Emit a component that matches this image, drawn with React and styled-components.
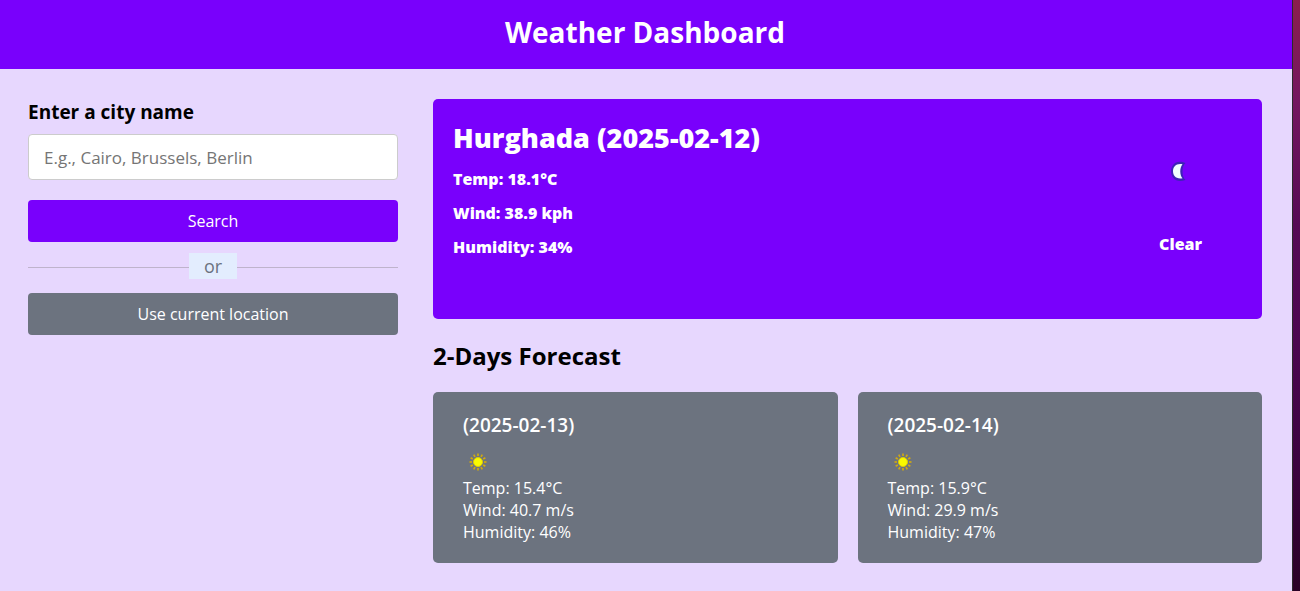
import React from "react";
import styled, { createGlobalStyle } from "styled-components";

const GlobalStyle = createGlobalStyle`
  * { box-sizing: border-box; margin: 0; padding: 0; }
  body { font-family: "Open Sans", sans-serif; font-size: 16px; color: #000; }
  button, input { font-family: inherit; }
`;

const Desktop = styled.div`
  display: flex;
  min-height: 100vh;
  padding-right: 7px;
  background: linear-gradient(#8b1e4e 0%, #74165f 17%, #560a55 38%, #4c0650 58%, #3c0340 78%, #2a0126 100%);
`;

const Page = styled.div`
  flex: 1;
  min-width: 0;
  background: #e7d7fe;
  border-right: 1px solid #2b2b2b;
`;

const Header = styled.header`
  padding: 12px 0 17px;
  background: #7900fc;
  color: #fff;
  text-align: center;
`;

const Title = styled.h1`
  font-size: 28px;
  line-height: 40px;
  padding-right: 2px;
`;

const Container = styled.div`
  display: flex;
  gap: 35px;
  padding: 30px 30px 28px 28px;
`;

const SearchPanel = styled.form`
  flex: 0 1 370px;
  display: flex;
  flex-direction: column;
`;

const CityLabel = styled.label`
  font-size: 19px;
  font-weight: 700;
  line-height: 26px;
  margin-bottom: 9px;
`;

const CityInput = styled.input`
  width: 100%;
  height: 46px;
  padding: 0 15px;
  border: 1px solid #ccc;
  border-radius: 4px;
  background: #fff;
  font-size: 17px;
  &::placeholder { color: #757575; }
`;

const Button = styled.button`
  width: 100%;
  height: 42px;
  margin-top: ${(p) => (p.$secondary ? "0" : "20px")};
  border: 0;
  border-radius: 4px;
  background: ${(p) => (p.$secondary ? "#6c737f" : "#7900fc")};
  color: #fff;
  font-size: 16px;
  cursor: pointer;
`;

const Separator = styled.div`
  display: flex;
  align-items: center;
  margin: 11px 0 14px;
  &::before, &::after {
    content: "";
    flex: 1;
    height: 1px;
    margin-top: 2px;
    background: #bfb3cc;
  }
`;

const SeparatorText = styled.span`
  padding: 0 15px;
  background: #e3edfe;
  color: #6c737f;
  font-size: 18px;
  line-height: 26px;
`;

const Weather = styled.main`
  flex: 1;
  min-width: 0;
`;

const CurrentCard = styled.section`
  display: flex;
  justify-content: space-between;
  min-height: 220px;
  padding: 20px 60px 20px 20px;
  border-radius: 5px;
  background: #7900fc;
  color: #fff;
  font-weight: 800;
`;

const City = styled.h2`
  font-size: 27px;
  font-weight: 800;
  line-height: 37px;
`;

const Reading = styled.p`
  margin-top: 12px;
  line-height: 22px;
`;

const Condition = styled.div`
  display: flex;
  flex-direction: column;
  align-items: center;
  padding-top: 20px;
  line-height: 22px;
`;

const MoonIcon = styled.svg`
  width: 64px;
  height: 64px;
  margin: 0 -12px 30px;
`;

const ForecastTitle = styled.h2`
  margin: 20px 0;
  font-size: 24px;
  line-height: 33px;
`;

const Forecast = styled.ul`
  display: grid;
  grid-template-columns: 1fr 1fr;
  gap: 20px;
  list-style: none;
`;

const DayCard = styled.li`
  padding: 20px 30px;
  border-radius: 5px;
  background: #6c737f;
  color: #fff;
  font-weight: 500;
  line-height: 22px;
`;

const DayTitle = styled.h3`
  font-size: 19px;
  font-weight: 600;
  line-height: 26px;
`;

const SunIcon = styled.svg`
  display: block;
  width: 30px;
  height: 30px;
  margin-top: 9px;
`;

const days = [
  { date: "2025-02-13", temp: "15.4", wind: "40.7", humidity: 46 },
  { date: "2025-02-14", temp: "15.9", wind: "29.9", humidity: 47 },
];

const rays = Array.from({ length: 12 }, (_, i) => i * 30);

function Moon() {
  return (
    <MoonIcon viewBox="0 0 64 64" aria-hidden="true">
      <path d="M36.500 24C27 20 22 26 22 32.300C22 38.500 27 44.500 36.500 41C32.500 38 32.500 27 36.500 24Z" fill="#3f22b8" />
      <path d="M33.500 25.200C27 24 24 28 24 32.300C24 36.500 27 40.500 33.500 39.300C30.500 36 30.500 28.500 33.500 25.200Z" fill="#f0ffff" />
    </MoonIcon>
  );
}

function Sun() {
  return (
    <SunIcon viewBox="0 0 30 30" aria-hidden="true">
      {rays.map((a) => (
        <line key={a} x1="15" y1="6.500" x2="15" y2="9" stroke="#cfa912" strokeWidth="1.700" transform={`rotate(${a} 15 15)`} />
      ))}
      <circle cx="15" cy="15" r="4.500" fill="#f8fa00" stroke="#dccb08" />
    </SunIcon>
  );
}

export default function App() {
  return (
    <Desktop>
      <GlobalStyle />
      <Page>
        <Header>
          <Title>Weather Dashboard</Title>
        </Header>
        <Container>
          <SearchPanel onSubmit={(e) => e.preventDefault()}>
            <CityLabel htmlFor="city">Enter a city name</CityLabel>
            <CityInput id="city" type="text" placeholder="E.g., Cairo, Brussels, Berlin" />
            <Button type="submit">Search</Button>
            <Separator>
              <SeparatorText>or</SeparatorText>
            </Separator>
            <Button type="button" $secondary>Use current location</Button>
          </SearchPanel>
          <Weather>
            <CurrentCard>
              <div>
                <City>Hurghada (2025-02-12)</City>
                <Reading>Temp: 18.1°C</Reading>
                <Reading>Wind: 38.9 kph</Reading>
                <Reading>Humidity: 34%</Reading>
              </div>
              <Condition>
                <Moon />
                <p>Clear</p>
              </Condition>
            </CurrentCard>
            <ForecastTitle>2-Days Forecast</ForecastTitle>
            <Forecast>
              {days.map((d) => (
                <DayCard key={d.date}>
                  <DayTitle>({d.date})</DayTitle>
                  <Sun />
                  <p>Temp: {d.temp}°C</p>
                  <p>Wind: {d.wind} m/s</p>
                  <p>Humidity: {d.humidity}%</p>
                </DayCard>
              ))}
            </Forecast>
          </Weather>
        </Container>
      </Page>
    </Desktop>
  );
}
